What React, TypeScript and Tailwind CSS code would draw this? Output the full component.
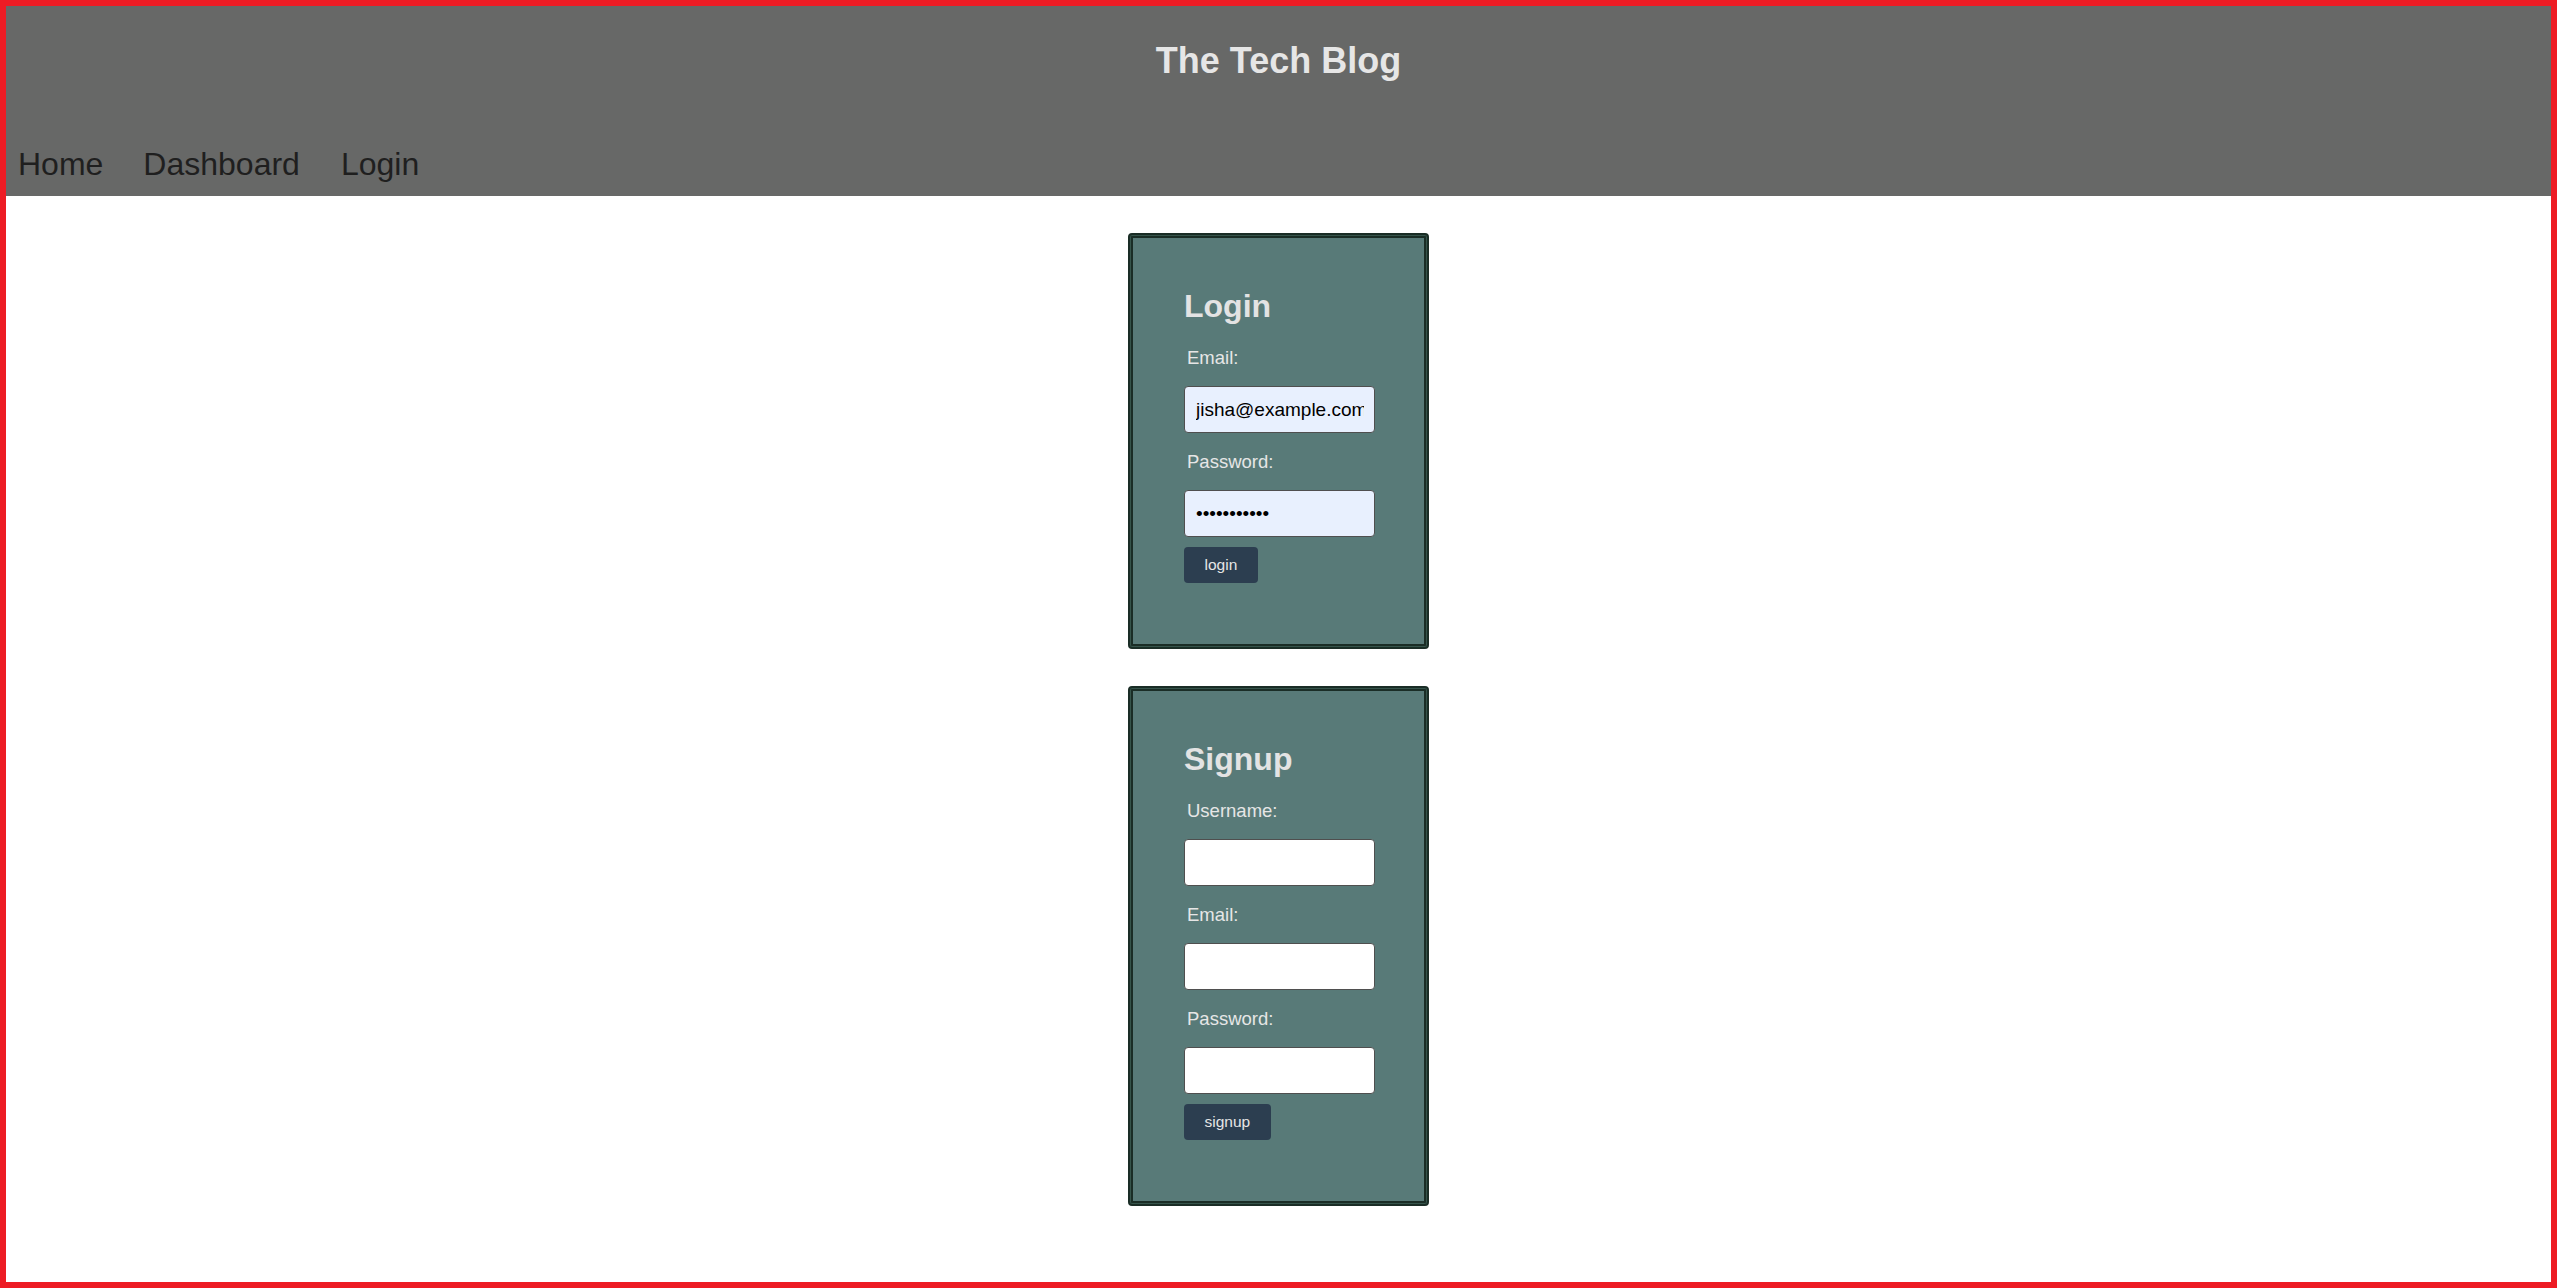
import React from "react";

const font = { fontFamily: '"Liberation Sans", Arial, sans-serif' };

const cardCls =
  "w-[301px] rounded-[4px] border-2 border-[#1a2d26] bg-[#587a78] shadow-[inset_0_0_0_1px_#36544b,inset_0_0_0_3px_#1a2d26] pl-[54px] pr-[54px] pt-[53px] pb-[64px]";
const labelCls =
  "block pl-[3px] text-[18.5px] leading-[22px] text-[#e6e6e6]";
const inputBase =
  "block w-[191px] h-[47px] rounded-[4px] border border-[#4f4f4f] pl-[11px] pr-[10px] text-[19px] text-black outline-none";
const buttonCls =
  "block mt-[10px] h-[36px] rounded-[4px] bg-[#2c3e50] px-[20.5px] text-[15.5px] text-[#e6e6e6]";

export default function App() {
  return (
    <div
      className="h-[1288px] w-full border-[6px] border-[#ed1c24] bg-white flex flex-col"
      style={font}
    >
      <header className="bg-[#676867] pt-[35px] pb-[14px] shrink-0">
        <h1 className="text-center text-[36px] leading-[40px] font-bold text-[#e6e6e6]">
          The Tech Blog
        </h1>
        <nav className="mt-[65px] flex text-[32px] leading-[36px] text-[#1f1f1f] pl-[12px]">
          <a href="#">Home</a>
          <a href="#" className="ml-[40px]">Dashboard</a>
          <a href="#" className="ml-[41px]">Login</a>
        </nav>
      </header>

      <main className="flex flex-col items-center pt-[37px]">
        {/* Login card */}
        <div className={cardCls}>
          <h2 className="text-[32px] leading-[36px] font-bold text-[#e3e3e3]">Login</h2>
          <label className={`${labelCls} mt-[23px]`}>Email:</label>
          <input
            type="text"
            defaultValue="jisha@example.com"
            className={`${inputBase} mt-[17px] bg-[#e8f0fe]`}
            style={font}
          />
          <label className={`${labelCls} mt-[18px]`}>Password:</label>
          <input
            type="password"
            defaultValue="password123"
            className={`${inputBase} mt-[17px] bg-[#e8f0fe]`}
            style={font}
          />
          <button className={buttonCls} style={font}>
            login
          </button>
        </div>

        {/* Signup card */}
        <div className={`${cardCls} mt-[37px]`}>
          <h2 className="text-[32px] leading-[36px] font-bold text-[#e3e3e3]">Signup</h2>
          <label className={`${labelCls} mt-[23px]`}>Username:</label>
          <input
            type="text"
            className={`${inputBase} mt-[17px] bg-white`}
            style={font}
          />
          <label className={`${labelCls} mt-[18px]`}>Email:</label>
          <input
            type="text"
            className={`${inputBase} mt-[17px] bg-white`}
            style={font}
          />
          <label className={`${labelCls} mt-[18px]`}>Password:</label>
          <input
            type="password"
            className={`${inputBase} mt-[17px] bg-white`}
            style={font}
          />
          <button className={buttonCls} style={font}>
            signup
          </button>
        </div>
      </main>
    </div>
  );
}
